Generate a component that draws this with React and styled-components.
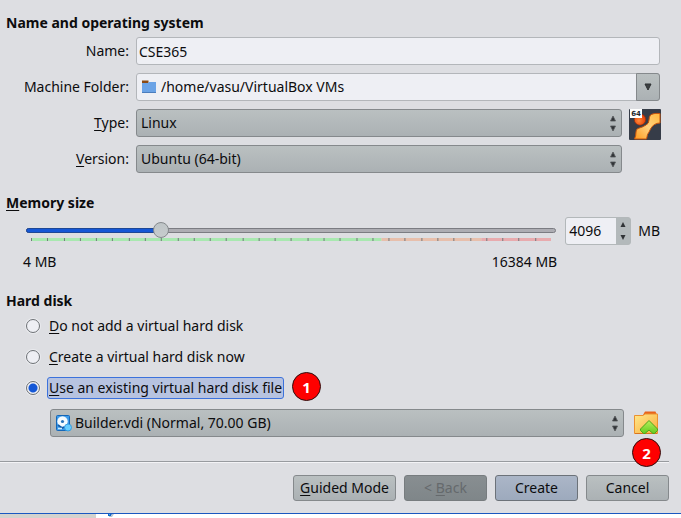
import React, { useState } from "react";
import styled, { createGlobalStyle, css } from "styled-components";

const GlobalStyle = createGlobalStyle`
  * {
    box-sizing: border-box;
  }
  body {
    margin: 0;
    background: #ffffff;
    color: #0c0c0e;
    font-family: "Noto Sans", "Open Sans", sans-serif;
    font-size: 14px;
    line-height: 20px;
  }
  input, select, button {
    margin: 0;
    color: inherit;
    font: inherit;
  }
`;

const raised = css`
  border: 1px solid #85898c;
  border-radius: 3px;
  background: linear-gradient(#bac0c1, #abb1b4);
`;

const Dialog = styled.form`
  padding: 13px 0 12px;
  background: #dddee2;
  border-bottom: 1px solid #1a58c0;
`;

const Section = styled.section`
  padding: 0 21px 0 6px;
  margin-bottom: ${(props) => (props.$tight ? "19px" : "20px")};
`;

const Title = styled.h2`
  margin: 0 0 4px;
  font-size: 14px;
  line-height: 20px;
  font-weight: 700;
`;

const Key = styled.span`
  text-decoration: underline;
  text-decoration-thickness: 1px;
  text-decoration-skip-ink: none;
  text-underline-offset: 2px;
`;

const Fields = styled.div`
  display: grid;
  grid-template-columns: 123px 1fr 31px;
  column-gap: 7px;
  row-gap: 8px;
`;

const Label = styled.label`
  line-height: 28px;
  text-align: right;
`;

const TextField = styled.input`
  grid-column: 2 / 4;
  width: 100%;
  height: 28px;
  padding: 0 2px;
  border: 1px solid #b3b6ba;
  border-radius: 3px;
  background: #eeeff4;
  outline: none;
`;

const SelectBox = styled.div`
  position: relative;
  grid-column: ${(props) => (props.$wide ? "2 / 4" : "auto")};
  flex: 1;
  min-width: 0;
  height: 28px;
`;

const Select = styled.select`
  display: block;
  width: 100%;
  height: 28px;
  padding: 0 24px 0 ${(props) => (props.$icon ? "24px" : "4px")};
  appearance: none;
  outline: none;
  ${raised}
  ${(props) =>
    props.$light &&
    css`
      border-color: #b3b6ba;
      background: #eeeff4;
    `}
`;

const LeadIcon = styled.svg`
  position: absolute;
  top: 6px;
  left: 5px;
  pointer-events: none;
`;

const Arrows = styled.svg`
  position: absolute;
  top: 6px;
  right: 5px;
  pointer-events: none;
`;

const DropArrow = styled.span`
  position: absolute;
  top: 0;
  right: 0;
  display: flex;
  align-items: center;
  justify-content: center;
  width: 24px;
  height: 28px;
  pointer-events: none;
  ${raised}
  border-radius: 0 3px 3px 0;
`;

const OsIcon = styled.svg`
  grid-row: 3 / 5;
  grid-column: 3;
`;

const Memory = styled.div`
  display: grid;
  grid-template-columns: 1fr 66px auto;
  column-gap: 6px;
  padding-left: 17px;
`;

const SliderBox = styled.div`
  display: grid;
  grid-template-rows: 16px 3px;
  padding-top: 5px;
  height: 28px;
`;

const Rail = styled.div`
  grid-area: 1 / 1;
  align-self: center;
  height: 5px;
  margin: 0 3px;
  border: 1px solid #7b7c82;
  border-radius: 3px;
  background: #adadb3;
`;

const RailFill = styled.div`
  height: 5px;
  margin: -1px;
  border: 1px solid #1e4795;
  border-radius: 3px;
  background: #1457d6;
`;

const Range = styled.input`
  grid-area: 1 / 1;
  position: relative;
  width: 100%;
  height: 16px;
  appearance: none;
  background: none;
  outline: none;

  &::-webkit-slider-thumb {
    appearance: none;
    width: 16px;
    height: 16px;
    border: 1px solid #85898c;
    border-radius: 50%;
    background: linear-gradient(#bfc5c7, #c7cccd);
  }
`;

const Scale = styled.svg`
  width: calc(100% - 16px);
  height: 3px;
  margin: 0 8px;
`;

const Limits = styled.div`
  display: flex;
  justify-content: space-between;
  grid-column: 1;
  padding: 7px 2px 0 0;
`;

const Spin = styled.div`
  display: flex;
  height: 28px;
  border: 1px solid #b3b8ba;
  border-radius: 3px;
  background: #b3b9bb;
  overflow: hidden;
`;

const SpinInput = styled.input`
  flex: 1;
  min-width: 0;
  padding: 0 3px;
  border: 0;
  background: #eeeff4;
  outline: none;
`;

const SpinButtons = styled.div`
  display: grid;
  width: 14px;
`;

const SpinButton = styled.button`
  display: flex;
  align-items: center;
  justify-content: center;
  padding: 0;
  border: 0;
  background: none;
`;

const Unit = styled.span`
  padding-left: 1px;
  line-height: 28px;
`;

const Choices = styled.div`
  display: grid;
  row-gap: 9px;
  padding-left: 20px;
`;

const Choice = styled.div`
  position: relative;
  display: flex;
  align-items: center;
  justify-self: start;
  gap: 7px;
  height: 22px;
`;

const Radio = styled.input`
  width: 14px;
  height: 14px;
  appearance: none;
  border: 1px solid #6d7175;
  border-radius: 50%;
  background: #eeeff4;
  box-shadow: 0 0 0 1px #e9eaee;

  &:checked {
    background: radial-gradient(circle, #1457d6 0 3px, #1457d6 4px, #eeeff4 5px);
  }
`;

const ChoiceLabel = styled.label`
  padding: 0 1px;
  line-height: 20px;
  border: 1px solid transparent;
  border-radius: 3px;
  ${(props) =>
    props.$active &&
    css`
      border-color: #3c72dc;
      background: #b7c3e0;
    `}
`;

const Badge = styled.span`
  position: absolute;
  top: ${(props) => props.$top};
  left: ${(props) => props.$left};
  width: 29px;
  height: 29px;
  border: 1px solid #2b1010;
  border-radius: 50%;
  background: #fe0000;
  color: #ffffff;
  font-size: 15px;
  font-weight: 700;
  line-height: 29px;
  text-align: center;
`;

const DiskRow = styled.div`
  display: flex;
  align-items: center;
  gap: 10px;
  margin-top: 10px;
  padding-left: 44px;
`;

const FolderButton = styled.button`
  position: relative;
  width: 26px;
  height: 26px;
  padding: 0;
  border: 0;
  background: none;
`;

const Footer = styled.footer`
  display: flex;
  justify-content: flex-end;
  gap: 8px;
  margin: 24px 12px 0 0;
  padding-top: 13px;
  border-top: 1px solid #989b9f;
  box-shadow: inset 0 1px #f3f3f6;
`;

const Button = styled.button`
  min-width: 83px;
  height: 26px;
  padding: 0 6px;
  line-height: 24px;
  white-space: nowrap;
  ${raised}
  ${(props) =>
    props.$primary &&
    css`
      border-color: #6c7279;
      background: linear-gradient(#abb6c7, #9daabd);
    `}

  &:disabled {
    border-color: #777c7f;
    background: linear-gradient(#888e91, #7f8689);
    color: #65696c;
  }
`;

const Behind = styled.div`
  display: grid;
  grid-template-columns: 96px 1fr;
  height: 4px;
`;

const BehindPanel = styled.div`
  background: #d3d2ce;
`;

const BehindIcon = styled.svg`
  margin-left: 12px;
`;

const UpDown = () => (
  <Arrows width="8" height="17" viewBox="0 0 8 17">
    <path d="M4 1 L6.5 6 H1.5Z M1.5 11 H6.5 L4 16Z" fill="#303336" stroke="#54585a" strokeWidth="0.8" />
  </Arrows>
);

const PathIcon = () => (
  <LeadIcon width="16" height="16" viewBox="0 0 16 16">
    <path d="M1 1.500h6.500v3H1z" fill="#8b4a13" />
    <path d="M1 4h6l1-1h7v10.500H1z" fill="#6ba3e6" />
    <path d="M1 13.500h14" stroke="#4b7dbd" />
  </LeadIcon>
);

const DiskIcon = () => (
  <LeadIcon width="17" height="17" viewBox="0 0 17 17">
    <rect x="1.5" y="0.5" width="13" height="15" rx="1" fill="#3d9bea" stroke="#1467b8" />
    <circle cx="7.5" cy="6.5" r="5.2" fill="#f4fbff" />
    <circle cx="7.5" cy="6.5" r="1.6" fill="#2874bb" />
    <path d="M3 10l4 3 2.500-1" fill="none" stroke="#125ca8" strokeWidth="1.600" />
    <path d="M3 13.500h4" stroke="#c9ebff" strokeWidth="1.500" />
    <circle cx="13" cy="12.500" r="3.500" fill="#67ceff" stroke="#2792dc" strokeWidth="0.800" />
  </LeadIcon>
);

const LinuxIcon = () => (
  <OsIcon width="32" height="32" viewBox="0 1 32 32" aria-hidden="true">
    <defs>
      <linearGradient id="flow" x1="1" y1="0" x2="0" y2="1">
        <stop offset="0" stopColor="#ffb83c" />
        <stop offset="0.500" stopColor="#ffd180" />
        <stop offset="1" stopColor="#ff9a1c" />
      </linearGradient>
      <radialGradient id="ball" cx="0.400" cy="0.600" r="0.600">
        <stop offset="0" stopColor="#ff8a3a" />
        <stop offset="1" stopColor="#e53c05" />
      </radialGradient>
    </defs>
    <rect y="1" width="32" height="31" rx="1" fill="#363c48" />
    <path
      d="M31 5.500 Q24 5 21.500 7 Q20 9 20 12 Q20 15.500 17 17 Q14 19 9 20.500 Q7 21 7 24 Q7 28 5.500 31 H17.500 Q18 29 18.500 26.500 Q20 24.500 21.500 21 Q23 18 25.500 16.500 Q28 15 31 15Z"
      fill="url(#flow)"
      stroke="#c9540c"
    />
    <circle cx="11" cy="11.500" r="5.700" fill="url(#ball)" stroke="#8c2a0c" strokeWidth="0.600" />
    <rect x="1" y="1" width="12" height="9" fill="#ffffff" />
    <text x="7" y="8" textAnchor="middle" fontFamily="DejaVu Sans" fontSize="7" fontWeight="700" fill="#23262c">
      64
    </text>
  </OsIcon>
);

const FolderIcon = () => (
  <svg width="26" height="26" viewBox="1 0 26 26" aria-hidden="true">
    <defs>
      <linearGradient id="folder" x1="0" y1="0" x2="1" y2="1">
        <stop offset="0" stopColor="#ffe98c" />
        <stop offset="1" stopColor="#f9ac3b" />
      </linearGradient>
      <linearGradient id="up" x1="0" y1="0" x2="0" y2="1">
        <stop offset="0" stopColor="#b6f05c" />
        <stop offset="1" stopColor="#64ca1e" />
      </linearGradient>
    </defs>
    <path d="M10 5 L12 1.500 H22.500 L24 5Z" fill="#e8641b" />
    <path d="M1.500 5.500 H10 L12 4 H24.500 V23.500 H1.500Z" fill="url(#folder)" stroke="#ec9130" />
    <path d="M2 23.500h22" stroke="#d9741f" />
    <path
      d="M16 10.500 L24.500 19 V20.500 L21.500 23.500 H20 L16 20 L12 23.500 H10.500 L7.500 20.500 V19Z"
      fill="url(#up)"
      stroke="#4da51a"
    />
  </svg>
);

const App = () => {
  const [memory, setMemory] = useState(4096);
  const [disk, setDisk] = useState("existing");

  const changeMemory = (value) => {
    setMemory(Math.min(16384, Math.max(4, Number(value) || 4)));
  };

  const percent = ((memory - 4) / (16384 - 4)) * 100;

  return (
    <>
      <GlobalStyle />
      <Dialog onSubmit={(e) => e.preventDefault()}>
        <Section>
          <Title>Name and operating system</Title>
          <Fields>
            <Label htmlFor="name">Name:</Label>
            <TextField id="name" defaultValue="CSE365" />

            <Label htmlFor="folder-path">Machine Folder:</Label>
            <SelectBox $wide>
              <Select id="folder-path" $light $icon>
                <option>/home/vasu/VirtualBox VMs</option>
              </Select>
              <PathIcon />
              <DropArrow>
                <svg width="8" height="8" viewBox="0 0 8 8">
                  <path d="M1 1H7L4 7Z" fill="#3c4042" stroke="#2d3032" />
                </svg>
              </DropArrow>
            </SelectBox>

            <Label htmlFor="type">
              <Key>T</Key>ype:
            </Label>
            <SelectBox>
              <Select id="type">
                <option>Linux</option>
              </Select>
              <UpDown />
            </SelectBox>
            <LinuxIcon />

            <Label htmlFor="version">
              <Key>V</Key>ersion:
            </Label>
            <SelectBox>
              <Select id="version">
                <option>Ubuntu (64-bit)</option>
              </Select>
              <UpDown />
            </SelectBox>
          </Fields>
        </Section>

        <Section $tight>
          <Title id="memory-title">
            <Key>M</Key>emory size
          </Title>
          <Memory>
            <SliderBox>
              <Rail>
                <RailFill style={{ width: `${percent}%` }} />
              </Rail>
              <Range
                type="range"
                min="4"
                max="16384"
                aria-labelledby="memory-title"
                value={memory}
                onChange={(e) => changeMemory(e.target.value)}
              />
              <Scale viewBox="0 0 521 3" preserveAspectRatio="none">
                <rect width="351" height="3" fill="#a8e8b0" />
                <rect x="351" width="100" height="3" fill="#e7bfac" />
                <rect x="451" width="70" height="3" fill="#e8abae" />
                {Array.from({ length: 32 }, (_, i) => (
                  <rect key={i} x={Math.round(i * 16.28)} width="1" height="3" fill="#74797c" />
                ))}
              </Scale>
            </SliderBox>
            <Spin>
              <SpinInput
                aria-labelledby="memory-title"
                value={memory}
                onChange={(e) => changeMemory(e.target.value)}
              />
              <SpinButtons>
                <SpinButton type="button" aria-label="Increase" onClick={() => changeMemory(memory + 4)}>
                  <svg width="6" height="5" viewBox="0 0 6 5">
                    <path d="M3 0L5.500 5H0.500Z" fill="#303336" />
                  </svg>
                </SpinButton>
                <SpinButton type="button" aria-label="Decrease" onClick={() => changeMemory(memory - 4)}>
                  <svg width="6" height="5" viewBox="0 0 6 5">
                    <path d="M0.500 0H5.500L3 5Z" fill="#303336" />
                  </svg>
                </SpinButton>
              </SpinButtons>
            </Spin>
            <Unit>MB</Unit>
            <Limits>
              <span>4 MB</span>
              <span>16384 MB</span>
            </Limits>
          </Memory>
        </Section>

        <Section>
          <Title>Hard disk</Title>
          <Choices>
            <Choice>
              <Radio type="radio" name="disk" id="none" checked={disk === "none"} onChange={() => setDisk("none")} />
              <ChoiceLabel htmlFor="none" $active={disk === "none"}>
                <Key>D</Key>o not add a virtual hard disk
              </ChoiceLabel>
            </Choice>
            <Choice>
              <Radio type="radio" name="disk" id="create" checked={disk === "create"} onChange={() => setDisk("create")} />
              <ChoiceLabel htmlFor="create" $active={disk === "create"}>
                <Key>C</Key>reate a virtual hard disk now
              </ChoiceLabel>
            </Choice>
            <Choice>
              <Radio
                type="radio"
                name="disk"
                id="existing"
                checked={disk === "existing"}
                onChange={() => setDisk("existing")}
              />
              <ChoiceLabel htmlFor="existing" $active={disk === "existing"}>
                <Key>U</Key>se an existing virtual hard disk file
              </ChoiceLabel>
              <Badge $top="-5px" $left="calc(100% + 8px)">
                1
              </Badge>
            </Choice>
          </Choices>
          <DiskRow>
            <SelectBox>
              <Select $icon aria-label="Hard disk file">
                <option>Builder.vdi (Normal, 70.00 GB)</option>
              </Select>
              <DiskIcon />
              <UpDown />
            </SelectBox>
            <FolderButton type="button" aria-label="Choose a disk file">
              <FolderIcon />
              <Badge $top="28px" $left="-2px">
                2
              </Badge>
            </FolderButton>
          </DiskRow>
        </Section>

        <Footer>
          <Button type="button">
            <Key>G</Key>uided Mode
          </Button>
          <Button type="button" disabled>
            &lt; <Key>B</Key>ack
          </Button>
          <Button type="submit" $primary>
            Create
          </Button>
          <Button type="button">Cancel</Button>
        </Footer>
      </Dialog>
      <Behind>
        <BehindPanel />
        <BehindIcon width="6" height="3" viewBox="0 0 6 3">
          <path d="M0 0h4l-1 2h-3z" fill="#1565c5" />
          <path d="M1 0h1v1h-1z" fill="#42b6ff" />
          <path d="M4 0h2l-2 3h-3v-1h2z" fill="#b4c2cf" />
        </BehindIcon>
      </Behind>
    </>
  );
};

export default App;
